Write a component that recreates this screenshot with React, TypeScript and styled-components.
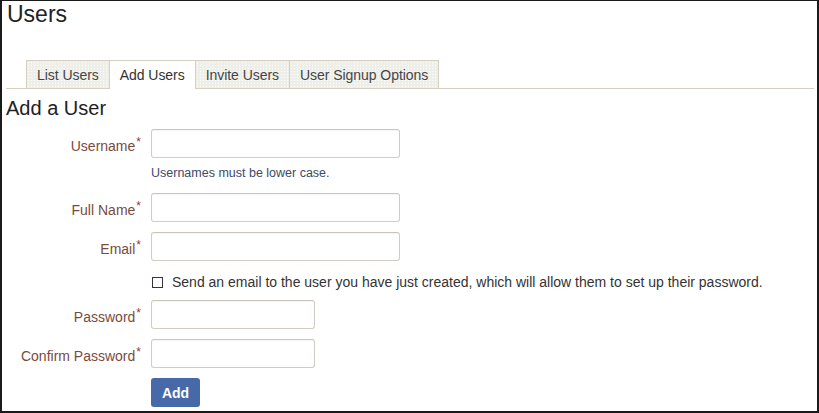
import React from "react";
import styled, { createGlobalStyle } from "styled-components";

const GlobalStyle = createGlobalStyle`
  html, body {
    margin: 0;
    padding: 0;
    background: #ffffff;
  }
  body {
    font-family: "Liberation Sans", Arial, sans-serif;
    color: #333333;
  }
`;

const Frame = styled.div`
  box-sizing: border-box;
  width: 819px;
  height: 413px;
  border-top: 1px solid #1a1a1a;
  border-left: 2px solid #1a1a1a;
  border-right: 2px solid #1a1a1a;
  border-bottom: 2px solid #1a1a1a;
  padding: 0 3px 0 4px;
  overflow: hidden;
`;

const PageTitle = styled.h1`
  margin: 0 0 0 1px;
  font-size: 23px;
  line-height: 26px;
  font-weight: normal;
  color: #222222;
`;

const TabBar = styled.div`
  display: flex;
  margin-top: 33px;
  padding-left: 20px;
  border-bottom: 1px solid #d6d0c2;
`;

const Tab = styled.div<{ active?: boolean }>`
  box-sizing: border-box;
  height: ${(p) => (p.active ? "29px" : "28px")};
  margin-bottom: ${(p) => (p.active ? "-1px" : "0")};
  padding: 2px 10px 0;
  line-height: 25px;
  font-size: 14px;
  letter-spacing: -0.05px;
  border: 1px solid #d6d0c2;
  border-bottom: none;
  color: ${(p) => (p.active ? "#333333" : "#454545")};
  background-color: ${(p) => (p.active ? "#ffffff" : "#efefea")};
  background-image: ${(p) =>
    p.active
      ? "none"
      : "radial-gradient(rgba(255,255,255,0.9) 0.6px, transparent 0.8px)"};
  background-size: 3px 3px;
  & + & {
    margin-left: -1px;
  }
`;

const SectionTitle = styled.h2`
  margin: 8px 0 0;
  font-size: 20px;
  line-height: 22px;
  font-weight: normal;
  color: #222222;
`;

const Form = styled.form`
  margin-top: 10px;
`;

const FieldRow = styled.div<{ gapAfter?: number }>`
  display: grid;
  grid-template-columns: 135px 1fr;
  column-gap: 10px;
  align-items: start;
  margin-bottom: ${(p) => (p.gapAfter ?? 10)}px;
`;

const Label = styled.label`
  padding-top: 8px;
  text-align: right;
  font-size: 14px;
  line-height: 18px;
  color: #7a4b3c;
  white-space: nowrap;
`;

const Required = styled.span`
  position: relative;
  top: -5px;
  margin-left: 1px;
  font-size: 12px;
  color: #8e3f2c;
`;

const Field = styled.div`
  display: flex;
  flex-direction: column;
  align-items: flex-start;
`;

const TextInput = styled.input<{ short?: boolean }>`
  box-sizing: border-box;
  width: ${(p) => (p.short ? "164px" : "249px")};
  height: 29px;
  margin: 0;
  padding: 4px 6px;
  border: 1px solid #d2cdc2;
  border-top-color: #c9c5bb;
  border-radius: 3px;
  background: #ffffff;
  box-shadow: inset 0 1px 1px rgba(0, 0, 0, 0.04);
  font-family: "Liberation Sans", Arial, sans-serif;
  font-size: 14px;
  outline: none;
`;

const Hint = styled.div`
  margin-top: 7px;
  font-size: 12.5px;
  line-height: 16px;
  color: #3e4a68;
`;

const CheckLine = styled.label`
  display: flex;
  align-items: center;
  font-size: 14px;
  line-height: 18px;
  color: #333333;
  white-space: nowrap;
`;

const CheckBox = styled.input`
  appearance: none;
  box-sizing: border-box;
  width: 11px;
  height: 11px;
  margin: 1px 9px 0 1px;
  border: 1px solid #3a3330;
  background: #ffffff;
  border-radius: 0;
`;

const SubmitButton = styled.button`
  box-sizing: border-box;
  width: 49px;
  height: 29px;
  padding: 0;
  border: none;
  border-radius: 3px;
  background: #4769a9;
  color: #ffffff;
  font-family: "Liberation Sans", Arial, sans-serif;
  font-size: 14px;
  font-weight: bold;
`;

const tabs = ["List Users", "Add Users", "Invite Users", "User Signup Options"];

export default function App() {
  return (
    <>
      <GlobalStyle />
      <Frame>
        <PageTitle>Users</PageTitle>
        <TabBar>
          {tabs.map((t) => (
            <Tab key={t} active={t === "Add Users"}>
              {t}
            </Tab>
          ))}
        </TabBar>
        <SectionTitle>Add a User</SectionTitle>
        <Form onSubmit={(e) => e.preventDefault()}>
          <FieldRow gapAfter={12}>
            <Label>
              Username<Required>*</Required>
            </Label>
            <Field>
              <TextInput type="text" />
              <Hint>Usernames must be lower case.</Hint>
            </Field>
          </FieldRow>
          <FieldRow>
            <Label>
              Full Name<Required>*</Required>
            </Label>
            <Field>
              <TextInput type="text" />
            </Field>
          </FieldRow>
          <FieldRow gapAfter={12}>
            <Label>
              Email<Required>*</Required>
            </Label>
            <Field>
              <TextInput type="text" />
            </Field>
          </FieldRow>
          <FieldRow gapAfter={9}>
            <span />
            <CheckLine>
              <CheckBox type="checkbox" />
              Send an email to the user you have just created, which will allow them to set up
              their password.
            </CheckLine>
          </FieldRow>
          <FieldRow>
            <Label>
              Password<Required>*</Required>
            </Label>
            <Field>
              <TextInput type="password" short />
            </Field>
          </FieldRow>
          <FieldRow>
            <Label>
              Confirm Password<Required>*</Required>
            </Label>
            <Field>
              <TextInput type="password" short />
            </Field>
          </FieldRow>
          <FieldRow gapAfter={0}>
            <span />
            <Field>
              <SubmitButton type="submit">Add</SubmitButton>
            </Field>
          </FieldRow>
        </Form>
      </Frame>
    </>
  );
}
